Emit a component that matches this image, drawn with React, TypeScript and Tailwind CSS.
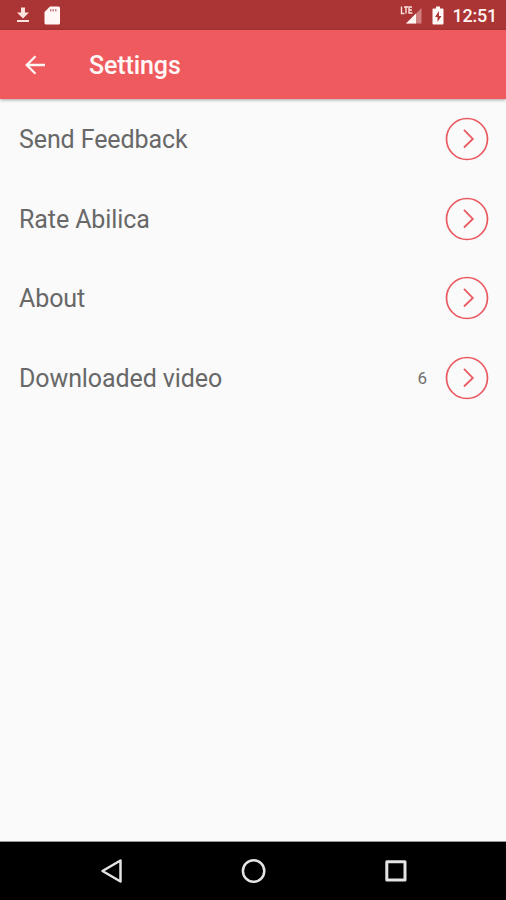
import React from 'react';

const rows: { label: string; count?: number }[] = [
  { label: 'Send Feedback' },
  { label: 'Rate Abilica' },
  { label: 'About' },
  { label: 'Downloaded video', count: 6 },
];

function StatusBar() {
  return (
    <div className="flex h-[30px] shrink-0 items-center justify-between bg-[#ab3435] pl-4 pr-[9px]">
      <div className="flex items-center gap-[14px]">
        <svg width="14" height="18" viewBox="0 0 14 18" fill="#fbe3df">
          <path d="M5 1.500h4v5h4l-6 6-6-6h4zM1 14h12v2H1z" />
        </svg>
        <svg width="16" height="19" viewBox="0 0 16 19">
          <path d="M6 .5h8.500a1.500 1.500 0 0 1 1.500 1.500v15a1.500 1.500 0 0 1-1.500 1.500h-12.500A1.500 1.500 0 0 1 .5 17V6z" fill="#fff8f6" />
          <path d="M6 3h1.500v2.500H6zM8.500 3H10v2.500H8.500zM11 3h1.500v2.500H11z" fill="#c98583" />
        </svg>
      </div>
      <div className="flex items-center">
        <svg width="22" height="20" viewBox="0 0 22 20">
          <path d="M21.500 3v15.500H6z" fill="#cf7f7d" />
          <path d="M16 8.500v10H6z" fill="#fff5f2" />
          <path d="M1.500 1.500v7h3M4 2h4M6 2v6.500M12 2H9v6h3.500M9 5h3" fill="none" stroke="#fbe3df" strokeWidth="1.400" />
        </svg>
        <svg className="ml-[10px]" width="12" height="19" viewBox="0 0 12 19">
          <path d="M4 .5h4v2h2.500a1 1 0 0 1 1 1v14a1 1 0 0 1-1 1h-9a1 1 0 0 1-1-1v-14a1 1 0 0 1 1-1H4z" fill="#fff8f6" />
          <path d="M7 5 3 11h2.500v5L9.500 10H7z" fill="#ab3435" />
        </svg>
        <span className="ml-[9px] mt-[2px] text-[18px] font-medium leading-[20px] tracking-[-0.25px] text-[#fff4f1]">12:51</span>
      </div>
    </div>
  );
}

function CircleChevron() {
  return (
    <svg width="44" height="44" viewBox="0 0 44 44" fill="none" stroke="#ea5960">
      <circle cx="22" cy="22" r="20.500" strokeWidth="1.700" />
      <path d="m19 12.800 8.800 9.200-8.800 8.500" strokeWidth="1.800" />
    </svg>
  );
}

export default function App() {
  return (
    <div className="flex h-[900px] w-[506px] flex-col overflow-hidden bg-[#fafafa] font-['Roboto',sans-serif]">
      <StatusBar />
      <header className="z-10 flex h-[69px] shrink-0 items-center bg-[#ef5a5f] pl-[24px] shadow-[0_1px_3px_rgba(0,0,0,0.35)]">
        <svg width="22" height="22" viewBox="0 0 22 22" fill="none" stroke="#fff5f2" strokeWidth="2.300">
          <path d="M21 11H3M11.500 2.200 2.700 11l8.800 8.800" />
        </svg>
        <h1 className="ml-[43px] mt-[3px] text-[25px] font-medium leading-[30px] tracking-[-0.1px] text-[#fff8f6]">Settings</h1>
      </header>
      <main className="flex-1">
        {rows.map((row) => (
          <div key={row.label} className="flex h-[79.800px] items-center pl-[19px] pr-[17px]">
            <span className="mt-[2px] flex-1 text-[25px] leading-[30px] tracking-[-0.1px] text-[#686868]">{row.label}</span>
            {row.count !== undefined && (
              <span className="mr-[18px] mt-px text-[17px] text-[#707070]">{row.count}</span>
            )}
            <CircleChevron />
          </div>
        ))}
      </main>
      <nav className="flex h-[59px] shrink-0 items-center border-t border-[#999] bg-black pl-[100px]">
        <svg width="24" height="28" viewBox="0 0 24 28" fill="none" stroke="#e4e4e4" strokeWidth="2.500" strokeLinejoin="round">
          <path d="M20.500 3.500v21L2.500 14z" />
        </svg>
        <svg className="ml-[117px]" width="26" height="26" viewBox="0 0 26 26" fill="none" stroke="#e4e4e4" strokeWidth="2.500">
          <circle cx="12.600" cy="13" r="10.700" />
        </svg>
        <svg className="ml-[117px]" width="24" height="24" viewBox="0 0 24 24" fill="none" stroke="#e4e4e4" strokeWidth="3" strokeLinejoin="round">
          <rect x="2.800" y="2.800" width="18.200" height="18.200" />
        </svg>
      </nav>
    </div>
  );
}
